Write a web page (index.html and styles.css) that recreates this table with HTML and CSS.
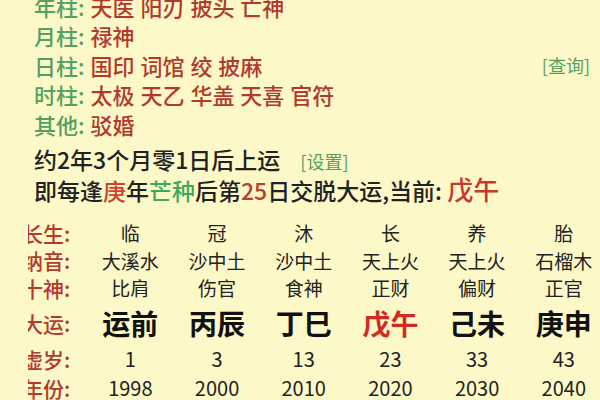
FILE: index.html
```html
<!DOCTYPE html>
<html lang="zh">
<head>
<meta charset="utf-8">
<link rel="stylesheet" href="styles.css">
</head>
<body>
<div class="page">
  <div class="shensha">
    <div class="line"><span class="lbl">年柱:</span> <span class="val">天医 阳刃 披头 亡神</span></div>
    <div class="line"><span class="lbl">月柱:</span> <span class="val">禄神</span></div>
    <div class="line row-q"><span><span class="lbl">日柱:</span> <span class="val">国印 词馆 绞 披麻</span></span><span class="link">[查询]</span></div>
    <div class="line"><span class="lbl">时柱:</span> <span class="val">太极 天乙 华盖 天喜 官符</span></div>
    <div class="line"><span class="lbl">其他:</span> <span class="val">驳婚</span></div>
  </div>
  <div class="yun">
    <div class="yline">约2年3个月零1日后上运<span class="link set">[设置]</span></div>
    <div class="yline">即每逢<span class="red">庚</span>年<span class="green">芒种</span>后第<span class="num">25</span>日交脱大运,当前: <span class="cur">戊午</span></div>
  </div>
  <div class="table">
    <div class="th">长生:</div>
    <div class="td">临</div><div class="td">冠</div><div class="td">沐</div><div class="td">长</div><div class="td">养</div><div class="td">胎</div>
    <div class="th">纳音:</div>
    <div class="td">大溪水</div><div class="td">沙中土</div><div class="td">沙中土</div><div class="td">天上火</div><div class="td">天上火</div><div class="td">石榴木</div>
    <div class="th">十神:</div>
    <div class="td">比肩</div><div class="td">伤官</div><div class="td">食神</div><div class="td">正财</div><div class="td">偏财</div><div class="td">正官</div>
    <div class="th">大运:</div>
    <div class="td big">运前</div><div class="td big">丙辰</div><div class="td big">丁巳</div><div class="td big now">戊午</div><div class="td big">己未</div><div class="td big">庚申</div>
    <div class="th">虚岁:</div>
    <div class="td n">1</div><div class="td n">3</div><div class="td n">13</div><div class="td n">23</div><div class="td n">33</div><div class="td n">43</div>
    <div class="th">年份:</div>
    <div class="td n">1998</div><div class="td n">2000</div><div class="td n">2010</div><div class="td n">2020</div><div class="td n">2030</div><div class="td n">2040</div>
  </div>
</div>
</body>
</html>
```
FILE: styles.css
```css
html, body {
  margin: 0;
  padding: 0;
  background: #fcf8c8;
  width: 600px;
  height: 400px;
  overflow: hidden;
}
.page {
  font-family: "Noto Sans CJK SC", "Noto Sans", sans-serif;
  font-weight: 500;
  color: #222;
}
.shensha {
  margin-top: -8px;
  padding-left: 34px;
  padding-right: 10px;
}
.line {
  font-size: 22px;
  line-height: 29.4px;
  height: 29.4px;
  white-space: nowrap;
  word-spacing: 1px;
}
.row-q {
  display: flex;
  justify-content: space-between;
  align-items: center;
}
.lbl { color: #54a062; }
.val { color: #b23a2c; }
.link {
  color: #54a062;
  font-size: 18px;
  font-weight: 400;
}
.yun {
  margin-top: 5px;
  padding-left: 34px;
}
.yline {
  font-size: 23px;
  line-height: 30px;
  height: 30px;
  white-space: nowrap;
}
.set { margin-left: 20px; }
.red { color: #d2412f; }
.green { color: #3fa85a; }
.num { color: #b8412c; }
.cur {
  color: #c8382c;
  font-size: 26px;
}
.table {
  margin-top: 15px;
  display: grid;
  grid-template-columns: 87px repeat(6, 86.7px);
  grid-template-rows: 28px 27px 28px 42px 30px 28px;
}
.th {
  color: #b23a2c;
  font-size: 21px;
  padding-left: 22px;
  display: flex;
  align-items: center;
  clip-path: inset(0 0 0 28px);
}
.td {
  display: flex;
  align-items: center;
  justify-content: center;
  font-size: 19px;
  font-weight: 400;
  color: #222;
  white-space: nowrap;
}
.big {
  font-size: 28px;
  font-weight: 700;
  color: #111;
}
.now { color: #d22a20; }
.n { font-size: 20px; }
```
